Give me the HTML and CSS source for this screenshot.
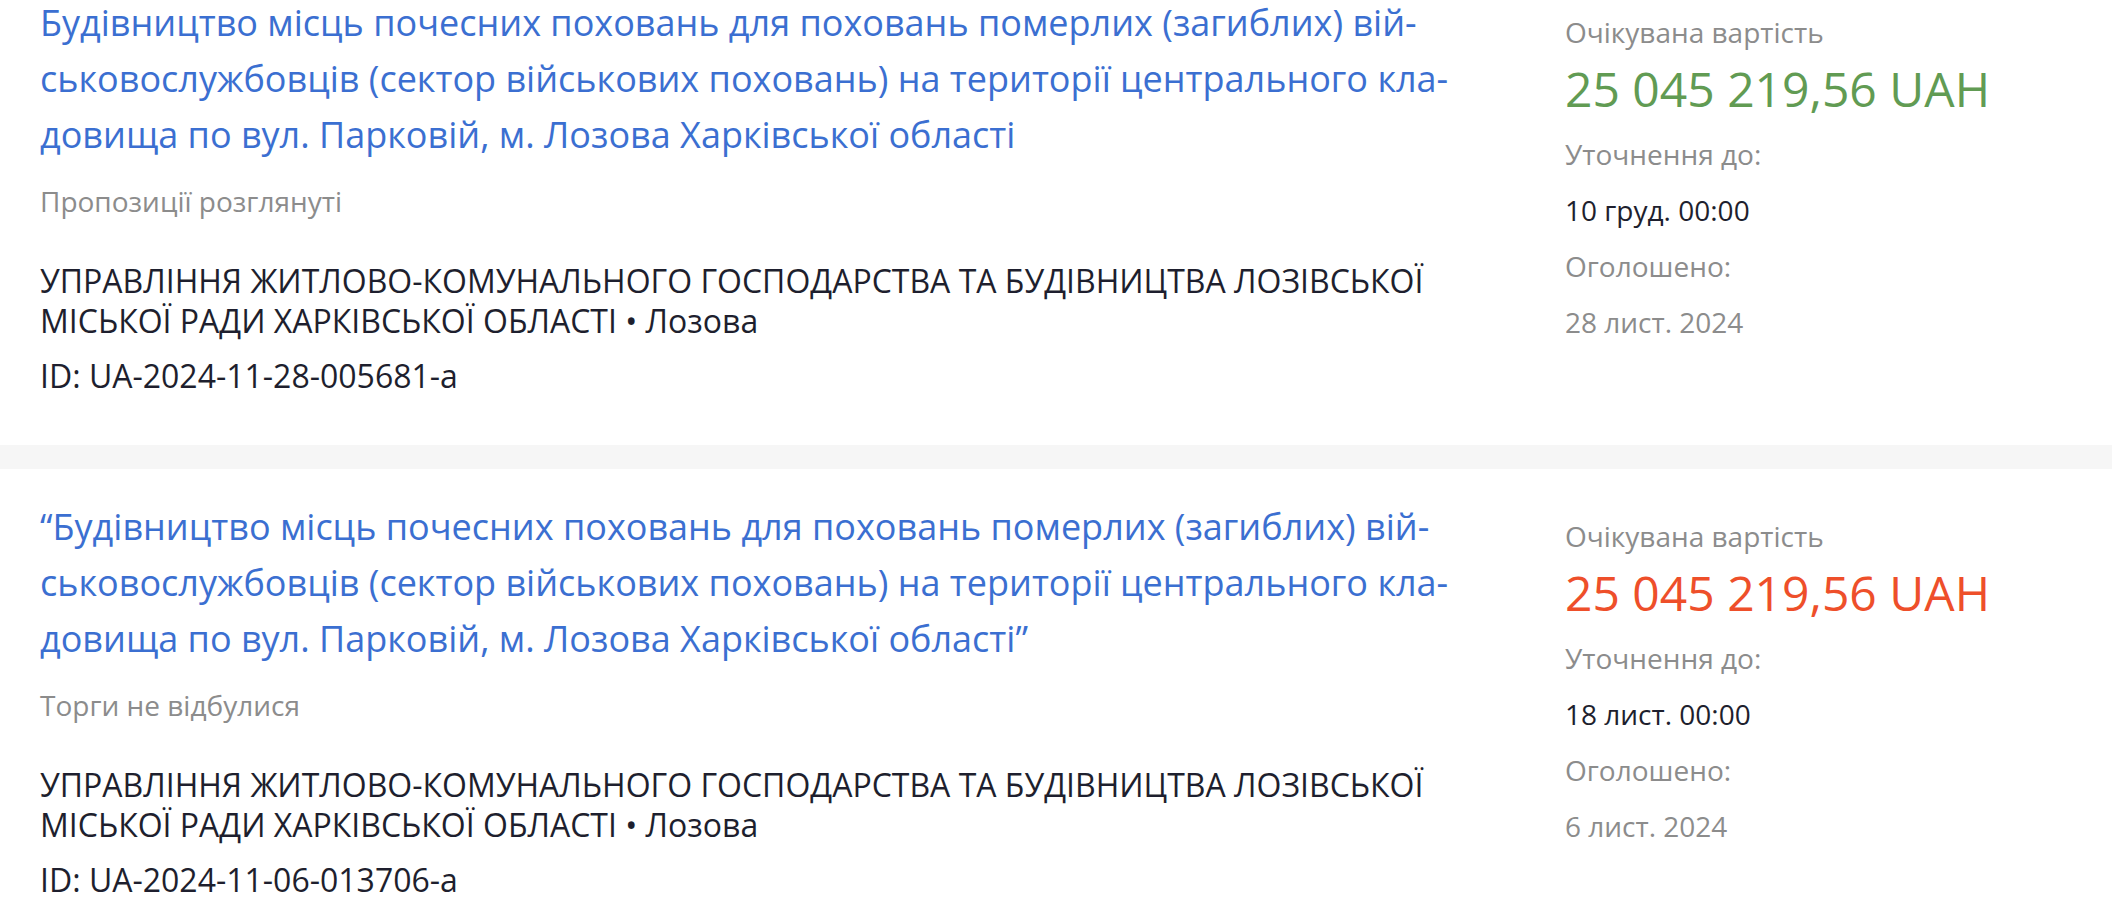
FILE: index.html
```html
<!DOCTYPE html>
<html lang="uk">
<head>
    <meta charset="UTF-8">
    <title>Закупівлі — Лозова</title>
    <link rel="stylesheet" href="styles.css">
</head>
<body>
<div class="feed">
    <div class="card">
        <div class="main">
            <a class="title" href="#">Будівництво місць почесних поховань для поховань померлих (загиблих) вій&shy;ськовослужбовців (сектор військових поховань) на території центрального кла&shy;довища по вул. Парковій, м. Лозова Харківської області</a>
            <div class="status">Пропозиції розглянуті</div>
            <div class="org">УПРАВЛІННЯ ЖИТЛОВО-КОМУНАЛЬНОГО ГОСПОДАРСТВА ТА БУДІВНИЦТВА ЛОЗІВСЬКОЇ МІСЬКОЇ РАДИ ХАРКІВСЬКОЇ ОБЛАСТІ • Лозова</div>
            <div class="tid">ID: UA-2024-11-28-005681-a</div>
        </div>
        <div class="side">
            <div class="label">Очікувана вартість</div>
            <div class="price green">25 045 219,56 UAH</div>
            <div class="label">Уточнення до:</div>
            <div class="value">10 груд. 00:00</div>
            <div class="label">Оголошено:</div>
            <div class="label">28 лист. 2024</div>
        </div>
    </div>
    <div class="card">
        <div class="main">
            <a class="title" href="#">“Будівництво місць почесних поховань для поховань померлих (загиблих) вій&shy;ськовослужбовців (сектор військових поховань) на території центрального кла&shy;довища по вул. Парковій, м. Лозова Харківської області”</a>
            <div class="status">Торги не відбулися</div>
            <div class="org">УПРАВЛІННЯ ЖИТЛОВО-КОМУНАЛЬНОГО ГОСПОДАРСТВА ТА БУДІВНИЦТВА ЛОЗІВСЬКОЇ МІСЬКОЇ РАДИ ХАРКІВСЬКОЇ ОБЛАСТІ • Лозова</div>
            <div class="tid">ID: UA-2024-11-06-013706-a</div>
        </div>
        <div class="side">
            <div class="label">Очікувана вартість</div>
            <div class="price red">25 045 219,56 UAH</div>
            <div class="label">Уточнення до:</div>
            <div class="value">18 лист. 00:00</div>
            <div class="label">Оголошено:</div>
            <div class="label">6 лист. 2024</div>
        </div>
    </div>
</div>
</body>
</html>
```

FILE: styles.css
```css
body,div{margin:0;padding:0;}
body{background:#fff;font-family:"Open Sans","Noto Sans",sans-serif;color:#1e1f2e;}
a{text-decoration:none;}

/* list of tenders, scrolled a little */
.feed{margin-top:-35px;}
.card{display:grid;grid-template-columns:1430px 1fr;column-gap:95px;padding:30px 40px 49px;background:#fff;}
.card + .card{border-top:24px solid #f6f6f6;}

.title{display:block;font-size:36px;line-height:56px;color:#3b6fd1;}
.status{margin-top:10px;font-size:28px;line-height:56px;color:#8c8c8c;}
.org{margin-top:32px;font-size:32px;line-height:40px;}
.tid{margin-top:15px;font-size:32px;line-height:40px;}

.side{margin-top:9px;}
.label{font-size:28px;line-height:56px;color:#8c8c8c;}
.value{font-size:28px;line-height:56px;color:#1e1f2e;}
.price{font-size:48px;line-height:58px;margin-bottom:8px;}
.price.green{color:#619b53;}
.price.red{color:#ee4f2a;}
```
